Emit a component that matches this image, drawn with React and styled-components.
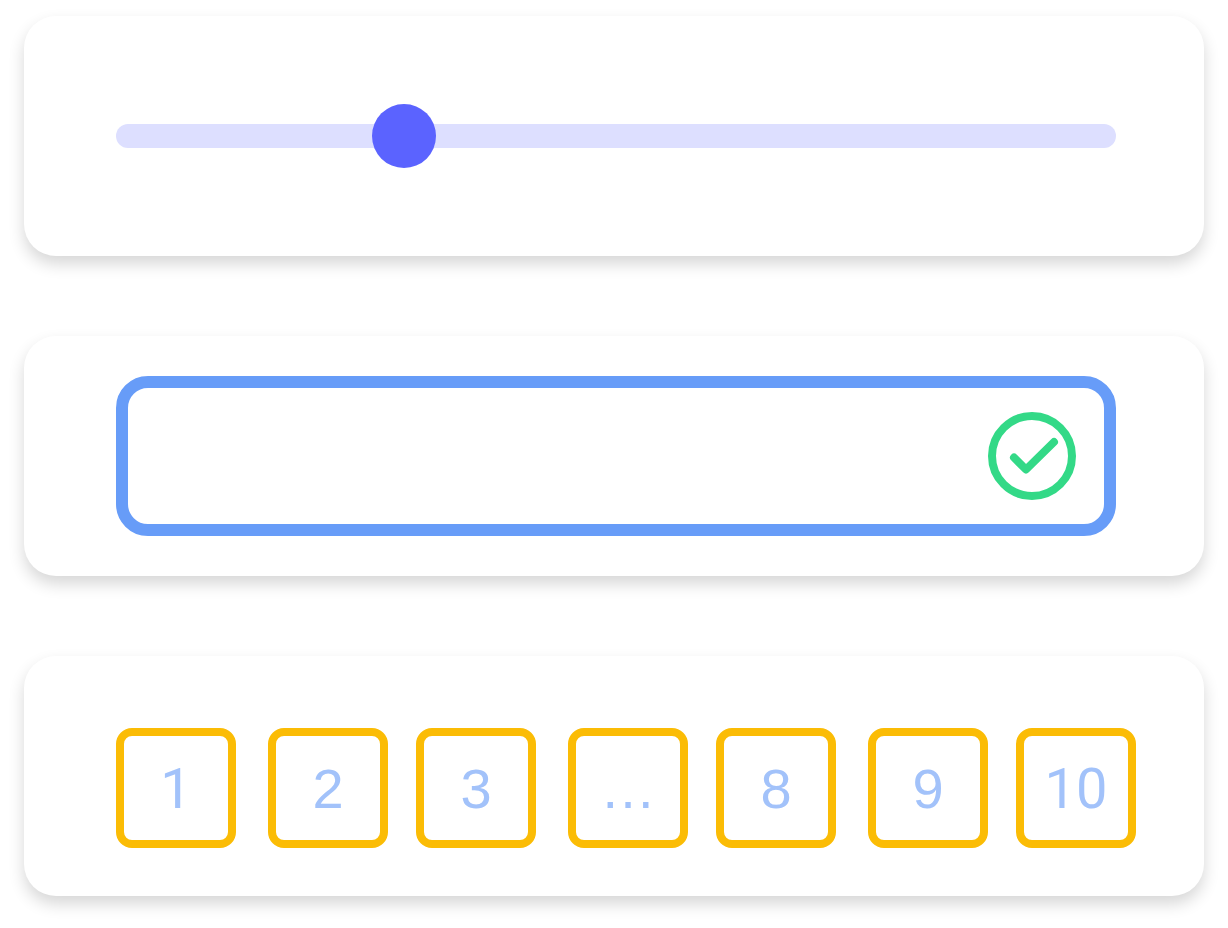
import React, { useState } from "react";
import styled, { createGlobalStyle } from "styled-components";

const GlobalStyle = createGlobalStyle`
  *, *::before, *::after { box-sizing: border-box; }
  body {
    margin: 0;
    background: #ffffff;
    font-family: "Liberation Sans", Arial, sans-serif;
  }
`;

const Page = styled.main`
  display: flex;
  flex-direction: column;
  gap: 80px;
  padding: 16px 24px 32px;
`;

const Card = styled.section`
  display: flex;
  align-items: center;
  min-height: 240px;
  padding: ${({ $padding }) => $padding};
  border-radius: 32px;
  background: #ffffff;
  box-shadow: 0 8px 16px rgba(0, 0, 0, 0.16);
`;

const Slider = styled.input`
  appearance: none;
  width: 100%;
  height: 64px;
  margin: 0;
  background: transparent;
  cursor: pointer;

  &::-webkit-slider-runnable-track {
    height: 24px;
    border-radius: 12px;
    background: #dddfff;
  }
  &::-webkit-slider-thumb {
    appearance: none;
    width: 64px;
    height: 64px;
    margin-top: -20px;
    border-radius: 50%;
    background: #5b63ff;
  }
`;

const Field = styled.div`
  display: flex;
  align-items: center;
  width: 100%;
  height: 160px;
  padding: 0 28px;
  border: 12px solid #679cf8;
  border-radius: 32px;
`;

const FieldInput = styled.input`
  flex: 1;
  min-width: 0;
  height: 100%;
  padding: 0;
  border: 0;
  outline: 0;
  background: transparent;
  color: #679cf8;
  font: inherit;
  font-size: 56px;
`;

const ValidIcon = styled.svg`
  flex: none;
  width: 88px;
  height: 88px;
  fill: none;
  stroke: #33d987;
  stroke-width: 8;
  stroke-linecap: round;
  stroke-linejoin: round;
`;

const Pagination = styled.nav`
  width: 100%;
`;

const PageList = styled.ul`
  display: flex;
  gap: 28px;
  margin: 0;
  padding: 0;
  list-style: none;
`;

const PageItem = styled.li`
  &:nth-child(even) {
    margin-left: 4px;
  }
`;

const PageButton = styled.button`
  width: 120px;
  height: 120px;
  padding: 2px 0 0;
  border: 8px solid #fbbc05;
  border-radius: 16px;
  background: transparent;
  color: #a2c2fa;
  font-family: ${({ $footless }) =>
    $footless ? 'Roboto, "Liberation Sans", sans-serif' : '"Liberation Sans", Arial, sans-serif'};
  font-size: 56px;
  line-height: 64px;
  text-align: center;
  cursor: pointer;
`;

const pages = ["1", "2", "3", "…", "8", "9", "10"];

export default function App() {
  const [value, setValue] = useState(256);
  const [text, setText] = useState("");

  return (
    <>
      <GlobalStyle />
      <Page>
        <Card $padding="0 88px 0 92px">
          <Slider
            type="range"
            aria-label="Value"
            min="0"
            max="936"
            value={value}
            onChange={(e) => setValue(Number(e.target.value))}
          />
        </Card>
        <Card $padding="40px 88px 40px 92px">
          <Field>
            <FieldInput
              type="text"
              aria-label="Text"
              value={text}
              onChange={(e) => setText(e.target.value)}
            />
            <ValidIcon viewBox="0 0 88 88" aria-hidden="true">
              <circle cx="44" cy="44" r="40" />
              <path d="M26 45.5 L38 57.5 L66 30" />
            </ValidIcon>
          </Field>
        </Card>
        <Card $padding="72px 68px 48px 92px">
          <Pagination aria-label="Pagination">
            <PageList>
              {pages.map((label) => (
                <PageItem key={label}>
                  <PageButton type="button" $footless={label.includes("1")}>
                    {label}
                  </PageButton>
                </PageItem>
              ))}
            </PageList>
          </Pagination>
        </Card>
      </Page>
    </>
  );
}
